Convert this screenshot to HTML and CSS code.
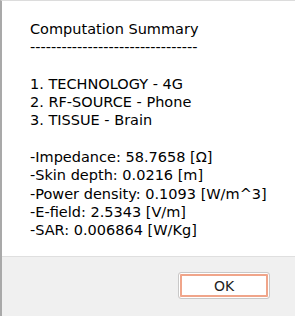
FILE: index.html
```html
<!DOCTYPE html>
<html lang="en">

<head>
    <meta charset="UTF-8">
    <title>Computation Summary</title>
    <link rel="stylesheet" href="styles.css">
</head>

<body>
    <div class="dialog">
        <div class="message">
            <p>Computation Summary</p>
            <p>--------------------------------</p>
            <p>&nbsp;</p>
            <p>1. TECHNOLOGY - 4G</p>
            <p>2. RF-SOURCE - Phone</p>
            <p>3. TISSUE - Brain</p>
            <p>&nbsp;</p>
            <p>-Impedance: 58.7658 [&Omega;]</p>
            <p>-Skin depth: 0.0216 [m]</p>
            <p>-Power density: 0.1093 [W/m^3]</p>
            <p>-E-field: 2.5343 [V/m]</p>
            <p>-SAR: 0.006864 [W/Kg]</p>
        </div>
        <div class="buttons">
            <button class="ok-button">OK</button>
        </div>
    </div>
</body>

</html>
```

FILE: styles.css
```css
* {
    margin: 0;
    padding: 0;
    box-sizing: border-box;
}

body {
    width: 295px;
    height: 316px;
    overflow: hidden;
    background-color: #fff;
    font-family: "DejaVu Sans", sans-serif;
}

/* Dialog frame */
.dialog {
    height: 316px;
    display: flex;
    flex-direction: column;
    border-left: 2px solid #a9a9a9;
    border-top: 1px solid #dcdcdc;
}

.message {
    height: 255px;
    padding: 19px 0 0 28px;
    font-size: 14.5px;
    line-height: 18.3px;
    color: #000;
    background-color: #fff;
}

/* Button strip */
.buttons {
    flex: 1;
    display: flex;
    justify-content: flex-end;
    align-items: flex-start;
    padding: 15px 25px 0 0;
    background-color: #f0f0f0;
    border-top: 1px solid #dfdfdf;
}

.ok-button {
    width: 92px;
    height: 27px;
    font-family: "DejaVu Sans", sans-serif;
    font-size: 14px;
    color: #222;
    background-color: #fff;
    border: 1px solid #c8c8c8;
    border-radius: 3px;
    box-shadow: inset 0 0 0 1px #fff, inset 0 0 0 3px #f0a58a;
}
```
